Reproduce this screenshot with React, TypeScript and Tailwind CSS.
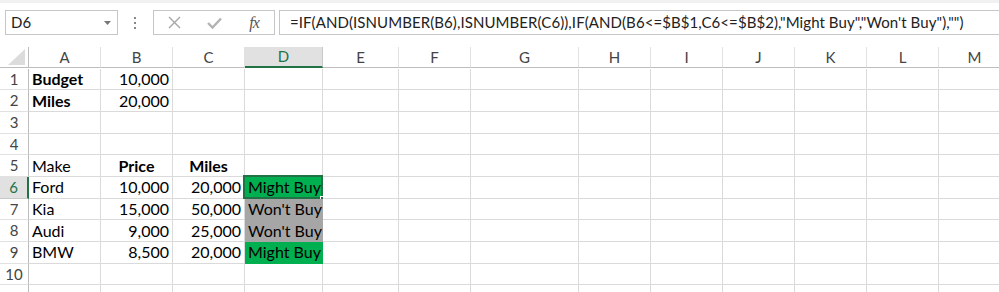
import React from "react"

const cols = ["A", "B", "C", "D", "E", "F", "G", "H", "I", "J", "K", "L", "M"]

type Cell = { text?: string; bold?: boolean; align?: "right" | "center"; fill?: "green" | "gray" }

const data: Record<number, Record<string, Cell>> = {
  1: { A: { text: "Budget", bold: true }, B: { text: "10,000", align: "right" } },
  2: { A: { text: "Miles", bold: true }, B: { text: "20,000", align: "right" } },
  5: {
    A: { text: "Make" },
    B: { text: "Price", bold: true, align: "center" },
    C: { text: "Miles", bold: true, align: "center" },
  },
  6: {
    A: { text: "Ford" },
    B: { text: "10,000", align: "right" },
    C: { text: "20,000", align: "right" },
    D: { text: "Might Buy", fill: "green" },
  },
  7: {
    A: { text: "Kia" },
    B: { text: "15,000", align: "right" },
    C: { text: "50,000", align: "right" },
    D: { text: "Won't Buy", fill: "gray" },
  },
  8: {
    A: { text: "Audi" },
    B: { text: "9,000", align: "right" },
    C: { text: "25,000", align: "right" },
    D: { text: "Won't Buy", fill: "gray" },
  },
  9: {
    A: { text: "BMW" },
    B: { text: "8,500", align: "right" },
    C: { text: "20,000", align: "right" },
    D: { text: "Might Buy", fill: "green" },
  },
}

const rows = [1, 2, 3, 4, 5, 6, 7, 8, 9, 10, 11]

function Toolbar() {
  return (
    <div className="h-[47px] border-t-[3px] border-[#f1f1f1] bg-white relative">
      {/* name box */}
      <div className="absolute left-[5px] top-[7px] w-[113px] h-[25px] border border-[#c6c6c6] flex items-center pl-[5px] pr-[6px]">
        <span className="text-[15px] text-[#222] flex-1">D6</span>
        <svg width="7" height="4" viewBox="0 0 7 4">
          <path d="M0 0 L7 0 L3.5 4 Z" fill="#777" />
        </svg>
      </div>
      {/* dots */}
      <div className="absolute left-[134px] top-[14px] flex flex-col gap-[3px]">
        <div className="w-[2px] h-[2px] bg-[#888]" />
        <div className="w-[2px] h-[2px] bg-[#888]" />
        <div className="w-[2px] h-[2px] bg-[#888]" />
      </div>
      {/* buttons */}
      <div className="absolute left-[153px] top-[7px] w-[122px] h-[25px] border border-[#c6c6c6] flex items-center">
        <div className="w-[40px] flex justify-center">
          <svg width="13" height="13" viewBox="0 0 13 13">
            <path d="M1 1 L12 12 M12 1 L1 12" stroke="#a6a6a6" strokeWidth="1.4" />
          </svg>
        </div>
        <div className="w-[40px] flex justify-center">
          <svg width="15" height="12" viewBox="0 0 15 12">
            <path d="M1 6 L5.5 10.5 L14 1.5" stroke="#b3b3b3" strokeWidth="2.4" fill="none" />
          </svg>
        </div>
        <div className="w-[40px] flex justify-center">
          <span className="text-[16px] italic text-[#555] font-['Liberation_Serif',serif] tracking-[-1px]">
            fx
          </span>
        </div>
      </div>
      {/* formula */}
      <div className="absolute left-[279px] top-[7px] right-[-5px] h-[25px] border border-[#c6c6c6] flex items-center pl-[10px]">
        <span className="text-[15px] text-[#222] whitespace-nowrap tracking-[0.08px]">
          =IF(AND(ISNUMBER(B6),ISNUMBER(C6)),IF(AND(B6&lt;=$B$1,C6&lt;=$B$2),"Might Buy","Won't Buy"),"")
        </span>
      </div>
    </div>
  )
}

function Grid() {
  return (
    <div className="grid grid-cols-[29px_72px_72px_72px_78px_76px_72px_108px_72px_72px_72px_72px_72px_72px] auto-rows-[21.67px]">
      {/* header row */}
      <div className="h-[21px] border-b border-r border-[#bdbdbd] bg-white relative">
        <svg className="absolute right-[3px] bottom-[2px]" width="17" height="16" viewBox="0 0 17 16">
          <path d="M17 0 L17 16 L0 16 Z" fill="#dcdcdc" />
        </svg>
      </div>
      {cols.map((c) =>
        c === "D" ? (
          <div
            key={c}
            className="h-[21px] bg-[#e1e1e1] border-b-2 border-b-[#217346] border-r border-r-[#c8c8c8] flex items-center justify-center text-[15px] text-[#217346]"
          >
            {c}
          </div>
        ) : (
          <div
            key={c}
            className="h-[21px] bg-white border-b border-b-[#bdbdbd] border-r border-r-[#e1e1e1] flex items-center justify-center text-[15px] text-[#444]"
          >
            {c}
          </div>
        )
      )}
      {rows.map((r) => (
        <React.Fragment key={r}>
          {r === 6 ? (
            <div className="bg-[#e1e1e1] border-r-2 border-r-[#217346] border-b border-b-[#c8c8c8] flex items-center justify-center text-[15px] text-[#217346]">
              {r}
            </div>
          ) : (
            <div className="bg-white border-r border-r-[#bdbdbd] border-b border-b-[#e1e1e1] flex items-center justify-center text-[15px] text-[#444]">
              {r < 11 ? r : ""}
            </div>
          )}
          {cols.map((c) => {
            const cell = data[r]?.[c]
            const bg =
              cell?.fill === "green"
                ? "bg-[#00b050] border-[#00b050]"
                : cell?.fill === "gray"
                ? "bg-[#a6a6a6] border-[#a6a6a6]"
                : "bg-white border-[#dadada]"
            const align =
              cell?.align === "right"
                ? "justify-end"
                : cell?.align === "center"
                ? "justify-center"
                : "justify-start"
            return (
              <div
                key={c}
                className={`relative border-r border-b ${bg} ${align} flex items-center px-[3px] text-[16px] text-black whitespace-nowrap ${
                  cell?.bold ? "font-bold" : ""
                }`}
              >
                {cell?.text}
                {r === 6 && c === "D" && (
                  <>
                    <div className="absolute left-[-2px] top-[-2px] right-[-1px] bottom-[-1px] border-2 border-[#217346]" />
                    <div className="absolute right-[-4px] bottom-[-4px] w-[6px] h-[6px] bg-[#217346] border border-white" />
                  </>
                )}
              </div>
            )
          })}
        </React.Fragment>
      ))}
    </div>
  )
}

export default function App() {
  return (
    <div className="w-[999px] h-[292px] overflow-hidden bg-white font-['Lato','Liberation_Sans',sans-serif]">
      <Toolbar />
      <Grid />
    </div>
  )
}
